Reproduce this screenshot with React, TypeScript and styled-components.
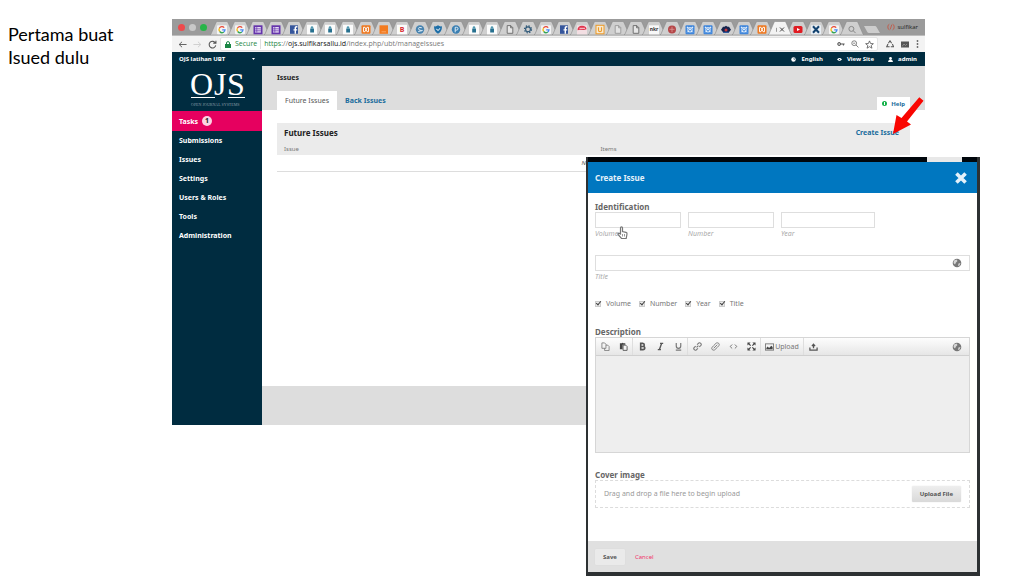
import React from 'react';
import styled, { createGlobalStyle, css } from 'styled-components';

const GlobalStyle = createGlobalStyle`
  *, *::before, *::after { box-sizing: border-box; }
  body { margin: 0; background: #fff; font-family: "Noto Sans", sans-serif; }
  h1, h2, h3, p, ul { margin: 0; padding: 0; }
  ul { list-style: none; }
  a { text-decoration: none; color: inherit; }
  button, input, textarea { font-family: inherit; }
  svg { display: block; flex: none; }
`;

const Slide = styled.main`
  position: relative;
  display: flex;
  align-items: flex-start;
  min-height: 576px;
  padding: 19px 99px 0 0;
  overflow: hidden;
`;

const Caption = styled.p`
  flex: 0 0 172px;
  padding: 4px 48px 0 8px;
  font: 18px/23px Lato, sans-serif;
  color: #000;
`;

/* ---------- browser window ---------- */

const Browser = styled.section`
  flex: 1;
  min-width: 0;
  display: flex;
  flex-direction: column;
  min-height: 406px;
`;

const TabStrip = styled.div`
  display: flex;
  align-items: flex-end;
  height: 17px;
  background: #9b9b9b;
  border-bottom: 1px solid #bdbdbd;
`;

const Lights = styled.div`
  display: flex;
  gap: 4px;
  align-self: center;
  padding: 0 3px 0 6px;
  width: 38px;
`;

const Light = styled.span<{ $color: string }>`
  width: 7px;
  height: 7px;
  border-radius: 50%;
  background: ${(p) => p.$color};
`;

const Tabs = styled.ul`
  display: flex;
  padding-right: 6px;
`;

const TabItem = styled.li<{ $active?: boolean }>`
  width: 24px;
  height: 14px;
  margin-right: -6px;
  position: relative;
  z-index: ${(p) => (p.$active ? 1 : 0)};
`;

const Profile = styled.span`
  display: flex;
  align-items: center;
  gap: 2px;
  margin-left: auto;
  padding-right: 7px;
  align-self: center;
  font: 6px/10px "Open Sans", sans-serif;
  color: #222;
`;

const AddressBar = styled.div`
  display: flex;
  align-items: center;
  height: 16px;
  padding: 0 6px;
  background: #f3f3f3;
`;

const NavIcons = styled.div`
  display: flex;
  align-items: center;
  width: 42px;
  gap: 6px;
`;

const Url = styled.div`
  flex: 1;
  display: flex;
  align-items: center;
  height: 14px;
  padding: 0 3px 0 4px;
  background: #fff;
  border: 1px solid #e4e4e4;
  border-radius: 2px;
  font: 7px/10px "Open Sans", sans-serif;
  color: #777;
  white-space: pre;
`;

const Secure = styled.span`
  color: #1b8745;
  padding: 0 3px 0 4px;
  margin-right: 3px;
  border-right: 1px solid #ddd;
`;

const Https = styled.span`color: #1b8745;`;
const Host = styled.span`color: #111;`;

const UrlIcons = styled.div<{ $end?: boolean }>`
  display: flex;
  align-items: center;
  gap: 6px;
  ${(p) => (p.$end ? css`padding-left: 8px; gap: 7px;` : css`margin-left: auto;`)}
`;

/* ---------- OJS page ---------- */

const TopBar = styled.header`
  display: flex;
  align-items: center;
  justify-content: space-between;
  height: 14px;
  padding: 0 8px 0 7px;
  background: #002c40;
  color: #fff;
  font-size: 6px;
  line-height: 10px;
  font-weight: 700;
`;

const SiteName = styled.a`
  display: flex;
  align-items: center;
  justify-content: space-between;
  width: 76px;
`;

const UserNav = styled.nav`
  display: flex;
  gap: 14px;
`;

const UserLink = styled.a`
  display: flex;
  align-items: center;
  gap: 5px;
`;

const Page = styled.div`
  flex: 1;
  display: flex;
`;

const Sidebar = styled.aside`
  flex: 0 0 90px;
  background: #002c40;
  color: #fff;
`;

const Logo = styled.div`
  height: 45px;
  padding-left: 17px;
`;

const Menu = styled.ul`
  font-size: 7px;
  font-weight: 700;
`;

const MenuItem = styled.li<{ $active?: boolean }>`
  background: ${(p) => (p.$active ? '#e6005f' : 'transparent')};
  a {
    display: flex;
    align-items: center;
    gap: 4px;
    height: ${(p) => (p.$active ? 20 : 19)}px;
    padding-left: 7px;
  }
`;

const Count = styled.span`
  width: 10px;
  height: 10px;
  border-radius: 50%;
  background: #fbd3e3;
  color: #222;
  text-align: center;
  line-height: 10px;
`;

const Content = styled.div`
  flex: 1;
  min-width: 0;
  display: flex;
  flex-direction: column;
`;

const PageHead = styled.div`
  height: 44px;
  padding: 6px 15px 0;
  background: #ddd;
  display: flex;
  flex-direction: column;
  justify-content: space-between;
`;

const PageTitle = styled.h1`
  font-size: 7px;
  line-height: 12px;
  color: #222;
`;

const PageTabs = styled.nav`
  display: flex;
  align-items: flex-end;
`;

const PageTab = styled.a<{ $active?: boolean }>`
  height: 19px;
  padding: 0 8px;
  font-size: 7px;
  line-height: 19px;
  font-weight: ${(p) => (p.$active ? 400 : 700)};
  color: ${(p) => (p.$active ? '#555' : '#1a6c9c')};
  background: ${(p) => (p.$active ? '#fff' : 'transparent')};
`;

const HelpTab = styled.a`
  display: flex;
  align-items: center;
  gap: 4px;
  height: 13px;
  margin-left: auto;
  padding: 0 5px;
  font-size: 6px;
  font-weight: 700;
  color: #1a6c9c;
  background: #fff;
`;

const Grid = styled.section`
  margin: 13px 15px 0;
`;

const GridHead = styled.div`
  display: flex;
  align-items: center;
  justify-content: space-between;
  height: 19px;
  padding: 0 11px 0 7px;
  background: #ebebeb;
  font-size: 7px;
  color: #222;
  h2 { font-size: 8px; }
  a { color: #1a6c9c; font-weight: 700; }
`;

const GridTable = styled.table`
  width: 100%;
  border-collapse: collapse;
  font-size: 6px;
  line-height: 8px;
  th {
    width: 50%;
    height: 13px;
    padding: 0 7px;
    background: #ebebeb;
    font-weight: 400;
    text-align: left;
    color: #777;
  }
  td {
    height: 16px;
    padding: 0;
    border-bottom: 1px solid #ddd;
    text-align: center;
    font-style: italic;
    color: #555;
  }
`;

const PageFoot = styled.footer`
  height: 39px;
  margin-top: auto;
  background: #ddd;
`;

/* ---------- modal ---------- */

const Modal = styled.section`
  position: absolute;
  top: 157px;
  right: 44px;
  width: 394px;
  border: solid #2d3133;
  border-width: 0 3px 4px 2px;
  background: #fff;
  color: #555;
  font-size: 7px;
  line-height: 10px;
`;

const ModalEdge = styled.div`
  display: flex;
  justify-content: flex-end;
  height: 5px;
  padding-right: 15px;
  background: #00060c;
  &::after {
    content: "";
    width: 35px;
    background: #e8e8e8;
  }
`;

const ModalHead = styled.header`
  display: flex;
  align-items: center;
  justify-content: space-between;
  height: 31px;
  padding: 0 10px 0 7px;
  background: #0077c0;
  color: #e4f1fa;
  h2 { font-size: 8px; }
`;

const IconButton = styled.button`
  display: flex;
  align-items: center;
  justify-content: center;
  padding: 0;
  border: 0;
  background: none;
  color: inherit;
`;

const Form = styled.form`
  display: flex;
  flex-direction: column;
`;

const FormBody = styled.div`
  display: flex;
  flex-direction: column;
  padding: 9px 7px 33px;
`;

const Legend = styled.h3`
  font-size: 8px;
  line-height: 10px;
  font-weight: 700;
  color: #666;
`;

const FieldRow = styled.div`
  display: flex;
  gap: 7px;
  margin-bottom: 16px;
`;

const Field = styled.div<{ $width?: number }>`
  display: flex;
  flex-direction: column;
  ${(p) => (p.$width ? `width: ${p.$width}px;` : 'flex: 1;')}
  label {
    font-size: 7px;
    line-height: 11px;
    font-style: italic;
    color: #aaa;
  }
`;

const InputBox = styled.div`
  display: flex;
  align-items: center;
  height: 16px;
  padding-right: 7px;
  border: 1px solid #dedede;
  color: #777;
  background: #fff;
  input {
    flex: 1;
    min-width: 0;
    height: 14px;
    padding: 0 4px;
    border: 0;
    background: none;
    font-size: 7px;
  }
`;

const Checks = styled.div`
  display: flex;
  gap: 8px;
  margin-bottom: 17px;
`;

const Check = styled.label`
  display: flex;
  align-items: center;
  gap: 5px;
  line-height: 12px;
  color: #777;
`;

const Tick = styled.input`
  appearance: none;
  display: grid;
  width: 6px;
  height: 6px;
  margin: 0;
  border: 1px solid #ccc;
  background: #ececec;
  &:checked::after {
    content: "";
    width: 3px;
    height: 5px;
    margin: -2px 0 0 1px;
    border: solid #444;
    border-width: 0 1px 1px 0;
    transform: rotate(40deg);
  }
`;

const Editor = styled.div`
  margin-bottom: 17px;
  border: 1px solid #d6d6d6;
  textarea {
    display: block;
    width: 100%;
    height: 96px;
    padding: 4px;
    border: 0;
    resize: none;
    background: #eee;
    font-size: 7px;
  }
`;

const Toolbar = styled.div`
  display: flex;
  align-items: center;
  height: 18px;
  border-bottom: 1px solid #d0d0d0;
  background: linear-gradient(#fdfdfd, #e6e6e6);
  color: #555;
`;

const ToolGroup = styled.div`
  display: flex;
  align-items: center;
  height: 17px;
  border-right: 1px solid #dedede;
`;

const Tool = styled(IconButton)<{ $wide?: boolean }>`
  width: ${(p) => (p.$wide ? 42 : 18)}px;
  height: 16px;
  gap: 1px;
  font-size: 7px;
  color: #777;
`;

const ToolEnd = styled.div`
  margin-left: auto;
  padding-right: 7px;
  color: #777;
`;

const DropZone = styled.div`
  display: flex;
  align-items: center;
  justify-content: space-between;
  height: 28px;
  padding: 0 8px;
  border: 1px dashed #dcdcdc;
  color: #999;
`;

const Button = styled.button<{ $pale?: boolean }>`
  height: 16px;
  padding: 0 8px;
  border: 0;
  border-radius: 1px;
  background: ${(p) => (p.$pale ? '#eaeaea' : 'linear-gradient(#eeeeee, #d9d9d9)')};
  box-shadow: 0 0 1px #ccc;
  font-size: 6px;
  line-height: 10px;
  font-weight: 700;
  color: #555;
`;

const FormFoot = styled.footer`
  display: flex;
  align-items: center;
  gap: 10px;
  height: 31px;
  padding: 0 7px;
  background: #e0e0e0;
  a { font-size: 6px; color: #f0346c; }
`;

const Arrow = styled.svg`
  position: absolute;
  top: 96px;
  right: 100px;
`;

const Pointer = styled.svg`
  position: absolute;
  top: 69px;
  left: 29px;
`;

/* ---------- icons ---------- */

type Fav =
  | 'g' | 'form' | 'fb' | 'person' | 'xampp' | 'box' | 'b' | 's' | 'shield' | 'p' | 'file'
  | 'fileLight' | 'gear' | 'red' | 'u' | 'nkr' | 'ball' | 'pattern' | 'eye' | 'current'
  | 'youtube' | 'x' | 'search';

const favicons: Record<Fav, React.ReactNode> = {
  g: (
    <g>
      <rect x="-5" y="-4" width="10" height="9" rx="1" fill="#f4f4f4" />
      <g fill="none" strokeWidth="1.300">
        <path d="M2.2-1.7A3 3 0 0 0-2.5-1.3" stroke="#e84535" />
        <path d="M-2.5-1.3A3 3 0 0 0-2.3 2.2" stroke="#f5b912" />
        <path d="M-2.3 2.2A3 3 0 0 0 1.8 2.7" stroke="#35a554" />
        <path d="M1.8 2.7A3 3 0 0 0 3 .5H.2" stroke="#4386f4" />
      </g>
    </g>
  ),
  form: (
    <g>
      <rect x="-4.500" y="-4" width="9" height="9" fill="#6534ac" />
      <rect x="-2.800" y="-2.300" width="5.600" height="5.600" fill="#e6dcf4" />
      <path d="M-2.800-.5H2.800M-2.800 1.500H2.800M-1.200-2.300V3.300" stroke="#6534ac" strokeWidth=".7" />
    </g>
  ),
  fb: (
    <g>
      <rect x="-4" y="-4" width="8" height="8.500" fill="#36569c" />
      <path d="M3.400-2.500H2.500Q1.300-2.500 1.300-1.300V4.500M-.5.6H3.200" fill="none" stroke="#fff" strokeWidth="1.400" />
    </g>
  ),
  person: (
    <g>
      <rect x="-5" y="-4.500" width="10" height="9.500" fill="#fbfbfb" />
      <rect x="-1.800" y="-.8" width="3.800" height="4" fill="#26708f" />
      <circle cy="-1.800" r="1.300" fill="#4f98b0" />
    </g>
  ),
  xampp: (
    <g>
      <rect x="-4.500" y="-4" width="9" height="8.500" rx="1" fill="#ee7922" />
      <path d="M-2.500-2H-1L1 2.400H2.500M-2.500 2.400H-1L1-2H2.500M-2.500-2V2.400M2.500-2V2.400" fill="none" stroke="#fff" strokeWidth=".9" />
    </g>
  ),
  box: (
    <g>
      <rect x="-4.500" y="-4" width="8.500" height="8.500" fill="#f37b20" />
      <path d="M-2.500 2.500H2" stroke="#f9a765" fill="none" />
    </g>
  ),
  b: (
    <g>
      <rect x="-5" y="-4.500" width="10" height="9.500" fill="#fbfbfb" />
      <text y="3" textAnchor="middle" fontSize="7" fontWeight="700" fill="#d8262c">B</text>
    </g>
  ),
  s: (
    <g>
      <circle r="4.200" cy=".2" fill="#4783b0" />
      <path d="M1.800-1.600Q-1.800-2.600-1.500-.6T1.600 1.200-1.800 2.200" stroke="#dcecf6" fill="none" />
    </g>
  ),
  shield: (
    <g>
      <path d="M-4-3Q-1.500-2.500 0-4 1.500-2.500 4-3 4 2.500 0 4.500-4 2.500-4-3Z" fill="#1e6fa8" />
      <path d="M-1.500-.5Q0 3 1.800-1" stroke="#fff" fill="none" />
    </g>
  ),
  p: (
    <g>
      <circle r="4.200" cy=".2" fill="#3a7fb2" />
      <path d="M-.8 3V-2H.6Q2 -2 2-.6T.6.8H-.8" stroke="#dcecf6" fill="none" />
    </g>
  ),
  file: <path d="M-2.800-3.700H.8L2.800-1.700V4H-2.800ZM.6-3.600V-1.500H2.700" fill="#e6e6e6" stroke="#666" strokeWidth=".9" />,
  fileLight: <path d="M-2.800-3.700H.8L2.800-1.700V4H-2.800ZM.6-3.600V-1.500H2.700" fill="#e2e2e2" stroke="#999" strokeWidth=".9" />,
  gear: (
    <g fill="none" stroke="#2a5576">
      <circle r="2.400" strokeWidth="1.100" />
      <circle r="3.500" strokeWidth="1.200" strokeDasharray="1.400 1.350" />
    </g>
  ),
  red: (
    <g>
      <rect x="-5" y="-4" width="10" height="9" fill="#f3dfe3" />
      <path d="M-4.500 1Q-4.500-3.500 0-3.500T4.500 0L2 .8-2 .4Z" fill="#e0334c" />
      <path d="M-2.500-1H3" stroke="#fff" strokeWidth=".8" />
    </g>
  ),
  u: (
    <g>
      <rect x="-4" y="-4" width="8" height="8.500" fill="#f8ead3" stroke="#ee9b27" />
      <path d="M-1.500-2V1Q-1.500 2.300 0 2.300T1.500 1V-2" stroke="#ee9b27" fill="none" strokeWidth="1.200" />
    </g>
  ),
  nkr: (
    <g>
      <rect x="-5" y="-4" width="10" height="9" fill="#f8f8f8" />
      <text y="2" textAnchor="middle" fontSize="5" fontWeight="700" fill="#333">nkr</text>
    </g>
  ),
  ball: (
    <g>
      <circle r="4" cy=".2" fill="#b54648" />
      <path d="M-2.500 0H2.500M0-2.500V2.800" stroke="#dc9a98" strokeWidth=".8" />
    </g>
  ),
  pattern: (
    <g>
      <rect x="-4.500" y="-4" width="9" height="9" rx="1" fill="#3f86dc" />
      <path d="M-3-2.500L3 3.500M3-2.500L-3 3.500" stroke="#e4f0fc" strokeWidth="1.200" strokeDasharray="2 .8" />
      <circle cy=".5" r="2.300" fill="none" stroke="#e4f0fc" strokeWidth=".9" />
    </g>
  ),
  eye: (
    <g>
      <path d="M-5 .5L-3-2.500H-1.500L0-3.500 1.500-2.500H3L5 .5 2.500 3.500H-2.500Z" fill="#16244e" />
      <circle cy=".8" r="1.500" fill="#c8383e" />
      <path d="M-3 3H3" stroke="#2b5da8" />
    </g>
  ),
  current: (
    <g fill="none" stroke="#444">
      <path d="M-3.500-1.500V2.500" stroke="#999" />
      <path d="M0-1.800L4 2.200M4-1.800L0 2.200" />
    </g>
  ),
  youtube: (
    <g>
      <rect x="-4.500" y="-3.200" width="9" height="7" rx="1.500" fill="#e01b22" />
      <path d="M-1-1.200L2 .3-1 1.800Z" fill="#fff" />
    </g>
  ),
  x: (
    <g>
      <rect x="-5" y="-4" width="10" height="9" fill="#e9eff5" />
      <path d="M-3-3L3 3.500M3-3L-3 3.500" stroke="#12426f" strokeWidth="2" />
    </g>
  ),
  search: (
    <g fill="none" stroke="#888">
      <circle cx="-.6" cy="-.4" r="2.500" />
      <path d="M1.200 1.400L3.600 3.800" />
    </g>
  ),
};

const openTabs: Fav[] = [
  'g', 'g', 'form', 'form', 'fb', 'person', 'person', 'person', 'xampp', 'box', 'b', 's',
  'shield', 'p', 'person', 'person', 'file', 'gear', 'g', 'fb', 'red', 'u', 'fileLight', 'file',
  'nkr', 'ball', 'pattern', 'pattern', 'eye', 'pattern', 'xampp', 'current', 'youtube', 'x', 'g',
  'search',
];

const BrowserTab = ({ icon }: { icon: Fav }) => {
  const active = icon === 'current';
  return (
    <TabItem $active={active}>
      <svg width="24" height="14" viewBox="0 0 24 14">
        <path
          d="M0 14L1 13 6 1.500Q6.300.5 7.500.5H16.500Q17.700.5 18 1.500L23 13 24 14Z"
          fill={active ? '#f3f3f3' : '#cfcfcf'}
          stroke="#8a8a8a"
          strokeWidth=".6"
        />
        <g transform="translate(12 8.300)">{favicons[icon]}</g>
      </svg>
    </TabItem>
  );
};

const Globe = ({ size = 9 }: { size?: number }) => (
  <svg width={size} height={size} viewBox="0 0 10 10">
    <circle cx="5" cy="5" r="4.300" fill="currentColor" />
    <path d="M2 2.500L4.500 1.500 5.500 3 4 4.500 3 6.500 1.500 5ZM6.500 5.500L8.500 5 7.500 7.500 6 8Z" fill="#fff" opacity=".7" />
  </svg>
);

const Stroke = ({ d, size = 9, width = 1, color = 'currentColor' }: { d: string; size?: number; width?: number; color?: string }) => (
  <svg width={size} height={size} viewBox="0 0 10 10" fill="none" stroke={color} strokeWidth={width}>
    <path d={d} />
  </svg>
);

const menu = ['Submissions', 'Issues', 'Settings', 'Users & Roles', 'Tools', 'Administration'];

const smallFields = [
  { name: 'Volume', width: 86 },
  { name: 'Number', width: 86 },
  { name: 'Year', width: 94 },
];

const CreateIssueModal = () => (
  <Modal role="dialog" aria-labelledby="modal-title">
    <ModalEdge />
    <ModalHead>
      <h2 id="modal-title">Create Issue</h2>
      <IconButton type="button" aria-label="Close">
        <Stroke size={12} width={3} d="M1.200 1.200L8.800 8.800M8.800 1.200L1.200 8.800" />
      </IconButton>
    </ModalHead>
    <Form onSubmit={(e) => e.preventDefault()}>
      <FormBody>
        <Legend>Identification</Legend>
        <FieldRow>
          {smallFields.map((f) => (
            <Field key={f.name} $width={f.width}>
              <InputBox><input id={`f-${f.name}`} type="text" /></InputBox>
              <label htmlFor={`f-${f.name}`}>{f.name}</label>
            </Field>
          ))}
        </FieldRow>
        <FieldRow>
          <Field>
            <InputBox>
              <input id="f-title" type="text" />
              <Globe size={10} />
            </InputBox>
            <label htmlFor="f-title">Title</label>
          </Field>
        </FieldRow>
        <Checks>
          {['Volume', 'Number', 'Year', 'Title'].map((name) => (
            <Check key={name}>
              <Tick type="checkbox" defaultChecked />
              {name}
            </Check>
          ))}
        </Checks>
        <Legend as="label" htmlFor="f-description">Description</Legend>
        <Editor>
          <Toolbar>
            <ToolGroup>
              <Tool type="button" aria-label="Copy">
                <Stroke d="M1 1H4L5.500 2.500V7H1ZM5.500 3.500H7.500L9 5V9.500H4V7" width={0.9} />
              </Tool>
              <Tool type="button" aria-label="Paste">
                <svg width="9" height="9" viewBox="0 0 10 10">
                  <path d="M1 1.500H3Q4 0 5 1.500H7V3H4V8H1Z" fill="#444" />
                  <path d="M4.500 3.500H7.500L9 5V9.300H4.500Z" fill="#f2f2f2" stroke="#555" />
                </svg>
              </Tool>
            </ToolGroup>
            <ToolGroup>
              <Tool type="button" aria-label="Bold">
                <Stroke color="#555" d="M3 1.500V8.500H5.500Q7.500 8.500 7.500 6.700T5.500 5H3H5.200Q7 5 7 3.300T5.200 1.500Z" width={1.8} />
              </Tool>
              <Tool type="button" aria-label="Italic">
                <Stroke color="#555" d="M4.500 1.500H8M2 8.500H5.500M6.300 1.500L3.700 8.500" width={1.5} />
              </Tool>
              <Tool type="button" aria-label="Underline">
                <Stroke d="M2.500 1V4.500Q2.500 7 5 7T7.500 4.500V1M2 9H8" width={1.3} />
              </Tool>
            </ToolGroup>
            <ToolGroup>
              <Tool type="button" aria-label="Insert link">
                <Stroke d="M4 6L6 4M4.500 3L6.300 1.200Q7.500.5 8.600 1.500T8.800 3.700L7 5.500M5.500 7L3.700 8.800Q2.500 9.500 1.400 8.500T1.200 6.300L3 4.500" width={1.2} />
              </Tool>
              <Tool type="button" aria-label="Remove link">
                <Stroke d="M3 4L5.800 1.200Q7.500.5 8.600 1.500T8.800 4L7 6M7 6L4 8.800Q2.500 9.500 1.400 8.500T1.200 6L3 4M3 7L7 3" width={1} />
              </Tool>
              <Tool type="button" aria-label="Source code">
                <Stroke d="M3.500 2.800L1.300 5 3.500 7.200M6.500 2.800L8.700 5 6.500 7.200" width={1.1} />
              </Tool>
              <Tool type="button" aria-label="Fullscreen">
                <svg width="9" height="9" viewBox="0 0 10 10" fill="#444">
                  <path d="M.5.5H4L.5 4ZM9.500.5V4L6 .5ZM.5 9.500V6L4 9.500ZM9.500 9.500H6L9.500 6Z" />
                  <path d="M1.500 1.500L8.500 8.500M8.500 1.500L1.500 8.500" stroke="#444" strokeWidth="1.300" strokeDasharray="3.600 2.700" />
                </svg>
              </Tool>
            </ToolGroup>
            <ToolGroup>
              <Tool type="button" $wide>
                <svg width="9" height="8" viewBox="0 0 10 8">
                  <rect x=".5" y=".5" width="9" height="7" fill="#f4f4f4" stroke="currentColor" />
                  <path d="M1.500 6.500V5L3 3.500 4.500 5 7 2.500 8.500 4V6.500Z" fill="#444" />
                </svg>
                Upload
              </Tool>
            </ToolGroup>
            <Tool type="button" aria-label="Upload file">
              <Stroke color="#555" d="M1 6V9H9V6M5 7V3M3.200 4.500L5 2.500 6.800 4.500" width={1.4} />
            </Tool>
            <ToolEnd><Globe size={10} /></ToolEnd>
          </Toolbar>
          <textarea id="f-description" />
        </Editor>
        <Legend>Cover image</Legend>
        <DropZone>
          Drag and drop a file here to begin upload
          <Button type="button">Upload File</Button>
        </DropZone>
      </FormBody>
      <FormFoot>
        <Button type="submit" $pale>Save</Button>
        <a href="#cancel">Cancel</a>
      </FormFoot>
    </Form>
    <Pointer width="11" height="14" viewBox="0 0 11 14">
      <path
        d="M3.500 8V2Q3.500.8 4.500.8T5.500 2V5.500L9 6.300Q10.200 6.700 10 8L9.200 12.500H4.500L1 8.500Q.8 7.200 2 7.200Z"
        fill="#fff"
        stroke="#777"
        strokeWidth="1.200"
      />
      <path d="M5.500 8V10.500M7.500 8V10.500" stroke="#999" />
    </Pointer>
  </Modal>
);

const App = () => (
  <>
    <GlobalStyle />
    <Slide>
      <Caption>Pertama buat Isued dulu</Caption>
      <Browser>
        <TabStrip>
          <Lights>
            <Light $color="#ee4a4c" />
            <Light $color="#c9c9c9" />
            <Light $color="#27b549" />
          </Lights>
          <Tabs>
            {openTabs.map((icon, i) => <BrowserTab key={i} icon={icon} />)}
          </Tabs>
          <svg width="18" height="14" viewBox="0 0 18 14">
            <path d="M0 5H11Q12 5 12.500 6L16 12H5Q3.800 12 3.300 11Z" fill="#cdcdcd" />
          </svg>
          <Profile>
            <Stroke size={8} color="#c8503c" d="M3 1.500Q1 2 1 5T3 8.500M7 1.500Q9 2 9 5T7 8.500M4 8L6 2" />
            sulfikar
          </Profile>
        </TabStrip>
        <AddressBar>
          <NavIcons>
            <Stroke color="#555" d="M9.500 5H1.500M4.500 2L1.300 5 4.500 8" />
            <Stroke color="#ccc" d="M.5 5H8.500M5.500 2L8.700 5 5.500 8" />
            <Stroke color="#555" d="M8.300 3.500A3.700 3.700 0 1 0 8.600 6M8.800.8V3.700H5.800" width={1.2} />
          </NavIcons>
          <Url>
            <svg width="6" height="7" viewBox="0 0 6 7">
              <rect y="3" width="6" height="4" fill="#1b8745" />
              <path d="M1.500 3V2Q1.500.6 3 .6T4.500 2V3" fill="none" stroke="#1b8745" />
            </svg>
            <Secure>Secure</Secure>
            <span><Https>https</Https>://<Host>ojs.sulfikarsallu.id</Host>/index.php/ubt/manageIssues</span>
            <UrlIcons>
              <Stroke size={8} color="#555" d="M1 5A1.700 1.700 0 1 0 4.400 5 1.700 1.700 0 1 0 1 5M4.400 5H9.500M8 5V7" width={1.3} />
              <Stroke size={8} color="#666" d="M1 4A3 3 0 1 0 7 4 3 3 0 1 0 1 4M6.200 6.200L9.300 9.300M2.700 4H5.300" />
              <Stroke size={9} color="#555" d="M5 1L6.200 3.900 9.300 4.100 6.900 6.100 7.700 9.100 5 7.400 2.300 9.100 3.100 6.100.7 4.100 3.800 3.900Z" width={0.9} />
            </UrlIcons>
          </Url>
          <UrlIcons $end>
            <Stroke size={8} color="#555" d="M3 4L5 1 7 4M8 5L9.500 8.500H6M4.500 8.500H.8L2.500 5" width={1.3} />
            <svg width="8" height="7" viewBox="0 0 8 7">
              <rect y=".5" width="8" height="6" fill="#555" />
              <path d="M1 5.500L3 3 4.500 4.500 6 3" stroke="#999" fill="none" strokeWidth=".8" />
            </svg>
            <svg width="3" height="8" viewBox="0 0 3 8" fill="#666">
              <circle cx="1.500" cy="1" r=".9" />
              <circle cx="1.500" cy="4" r=".9" />
              <circle cx="1.500" cy="7" r=".9" />
            </svg>
          </UrlIcons>
        </AddressBar>
        <TopBar>
          <SiteName href="#site">
            OJS latihan UBT
            <svg width="3" height="2" viewBox="0 0 3 2"><path d="M0 0H3L1.500 2Z" fill="#fff" /></svg>
          </SiteName>
          <UserNav>
            <UserLink href="#language"><svg width="5" height="5" viewBox="0 0 10 10"><circle cx="5" cy="5" r="4.500" fill="#fff" /><path d="M5 2L8 4 6 6Z" fill="#002c40" /></svg>English</UserLink>
            <UserLink href="#view"><svg width="5" height="5" viewBox="0 0 12 10"><path d="M0 5Q6-2 12 5 6 12 0 5Z" fill="#fff" /><circle cx="6" cy="5" r="1.500" fill="#002c40" /></svg>View Site</UserLink>
            <UserLink href="#user"><svg width="5" height="5" viewBox="0 0 10 10" fill="#fff"><circle cx="5" cy="3" r="2.800" /><path d="M0 10Q0 5.500 5 5.500T10 10Z" /></svg>admin</UserLink>
          </UserNav>
        </TopBar>
        <Page>
          <Sidebar>
            <Logo>
              <svg width="60" height="45" viewBox="0 0 60 45" fill="#fff" fontFamily="'Liberation Serif', serif">
                <text x="1" y="29" fontSize="32">O</text>
                <text x="25" y="29" fontSize="32">J</text>
                <text x="38" y="29" fontSize="32">S</text>
                <path d="M2 31.500H26M39 31.500H56" stroke="#fff" />
                <text x="2" y="40" fontSize="4" fill="#8a9ca6">OPEN JOURNAL SYSTEMS</text>
              </svg>
            </Logo>
            <Menu>
              <MenuItem $active><a href="#tasks">Tasks <Count>1</Count></a></MenuItem>
              {menu.map((item) => (
                <MenuItem key={item}><a href={`#${item}`}>{item}</a></MenuItem>
              ))}
            </Menu>
          </Sidebar>
          <Content>
            <PageHead>
              <PageTitle>Issues</PageTitle>
              <PageTabs>
                <PageTab href="#future" $active>Future Issues</PageTab>
                <PageTab href="#back">Back Issues</PageTab>
                <HelpTab href="#help">
                  <svg width="5" height="5" viewBox="0 0 10 10"><circle cx="5" cy="5" r="5" fill="#12b048" /><path d="M5 2V8" stroke="#fff" strokeWidth="2" /></svg>
                  Help
                </HelpTab>
              </PageTabs>
            </PageHead>
            <Grid>
              <GridHead>
                <h2>Future Issues</h2>
                <a href="#create">Create Issue</a>
              </GridHead>
              <GridTable>
                <thead><tr><th>Issue</th><th>Items</th></tr></thead>
                <tbody><tr><td colSpan={2}>No Items</td></tr></tbody>
              </GridTable>
            </Grid>
            <PageFoot />
          </Content>
        </Page>
      </Browser>
      <CreateIssueModal />
      <Arrow width="32" height="40" viewBox="0 0 32 40">
        <path d="M27.300 1.300L31.500 4.700 15 25.500 19 28.500 1 38 4.500 19 9.500 22Z" fill="#f90500" />
      </Arrow>
    </Slide>
  </>
);

export default App;
